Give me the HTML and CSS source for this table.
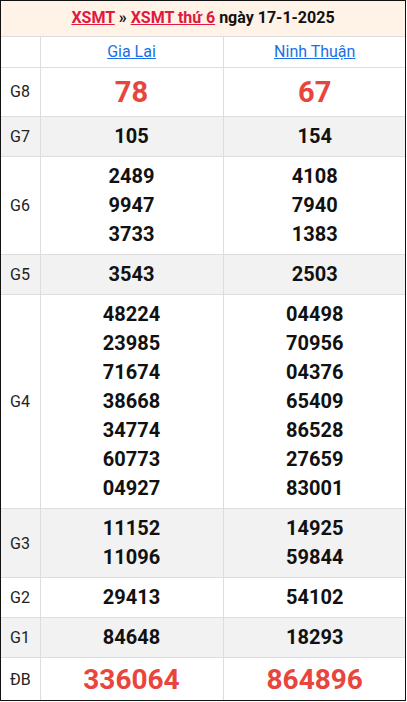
FILE: index.html
```html
<!DOCTYPE html>
<html lang="vi">
<head>
<meta charset="utf-8">
<link rel="stylesheet" href="styles.css">
</head>
<body>
<div class="box">
  <div class="title"><a href="#">XSMT</a> » <a href="#">XSMT thứ 6</a> ngày 17-1-2025</div>
  <table class="kq">
    <colgroup><col class="c-label"><col class="c-prov"><col class="c-prov"></colgroup>
    <tr class="prov">
      <td></td>
      <td><a href="#">Gia Lai</a></td>
      <td><a href="#">Ninh Thuận</a></td>
    </tr>
    <tr class="g8">
      <td class="lbl">G8</td>
      <td class="big">78</td>
      <td class="big">67</td>
    </tr>
    <tr class="alt">
      <td class="lbl">G7</td>
      <td class="num">105</td>
      <td class="num">154</td>
    </tr>
    <tr>
      <td class="lbl">G6</td>
      <td class="num"><div>2489</div><div>9947</div><div>3733</div></td>
      <td class="num"><div>4108</div><div>7940</div><div>1383</div></td>
    </tr>
    <tr class="alt">
      <td class="lbl">G5</td>
      <td class="num">3543</td>
      <td class="num">2503</td>
    </tr>
    <tr>
      <td class="lbl">G4</td>
      <td class="num"><div>48224</div><div>23985</div><div>71674</div><div>38668</div><div>34774</div><div>60773</div><div>04927</div></td>
      <td class="num"><div>04498</div><div>70956</div><div>04376</div><div>65409</div><div>86528</div><div>27659</div><div>83001</div></td>
    </tr>
    <tr class="alt">
      <td class="lbl">G3</td>
      <td class="num"><div>11152</div><div>11096</div></td>
      <td class="num"><div>14925</div><div>59844</div></td>
    </tr>
    <tr>
      <td class="lbl">G2</td>
      <td class="num">29413</td>
      <td class="num">54102</td>
    </tr>
    <tr class="alt">
      <td class="lbl">G1</td>
      <td class="num">84648</td>
      <td class="num">18293</td>
    </tr>
    <tr class="db">
      <td class="lbl">ĐB</td>
      <td class="big">336064</td>
      <td class="big">864896</td>
    </tr>
  </table>
</div>
</body>
</html>
```
FILE: styles.css
```css
html, body {
  margin: 0;
  padding: 0;
  background: #fff;
}
body {
  font-family: Roboto, "Liberation Sans", Arial, sans-serif;
  color: #111;
}
.box {
  width: 404px;
  height: 699px;
  border: 1px solid #111;
  overflow: hidden;
}
.title {
  height: 35px;
  line-height: 34px;
  background: #fff2e7;
  text-align: center;
  font-size: 16px;
  font-weight: bold;
  color: #111;
  border-bottom: 1px solid #ddd;
}
.title a {
  color: #e0193f;
  text-decoration: underline;
}
.kq {
  width: 405px;
  border-collapse: collapse;
  table-layout: fixed;
}
.c-label { width: 39px; }
.c-prov { width: 183px; }
.kq td {
  border: 1px solid #ddd;
  text-align: center;
  vertical-align: middle;
  padding: 5px 0;
}
.kq tr td:first-child { border-left: none; }
.kq tr td:last-child { border-right: none; }
.kq tr:first-child td { border-top: none; }
.kq tr:last-child td { border-bottom: none; }
.prov td {
  height: 20px;
  font-size: 16px;
  line-height: 20px;
}
.prov a {
  color: #1a6fe6;
  text-decoration: underline;
}
.alt td { background: #f2f2f2; }
.lbl {
  font-size: 16px;
  color: #222;
}
.kq td.lbl { text-align: left; padding-left: 9px; }
.num {
  font-size: 20px;
  font-weight: bold;
  line-height: 29px;
  color: #111;
}
.big {
  font-size: 29px;
  font-weight: bold;
  color: #e8453c;
}
.g8 td { height: 38px; line-height: 38px; }
.db td { height: 33px; line-height: 33px; }
.db td.big { font-size: 28px; }
```
